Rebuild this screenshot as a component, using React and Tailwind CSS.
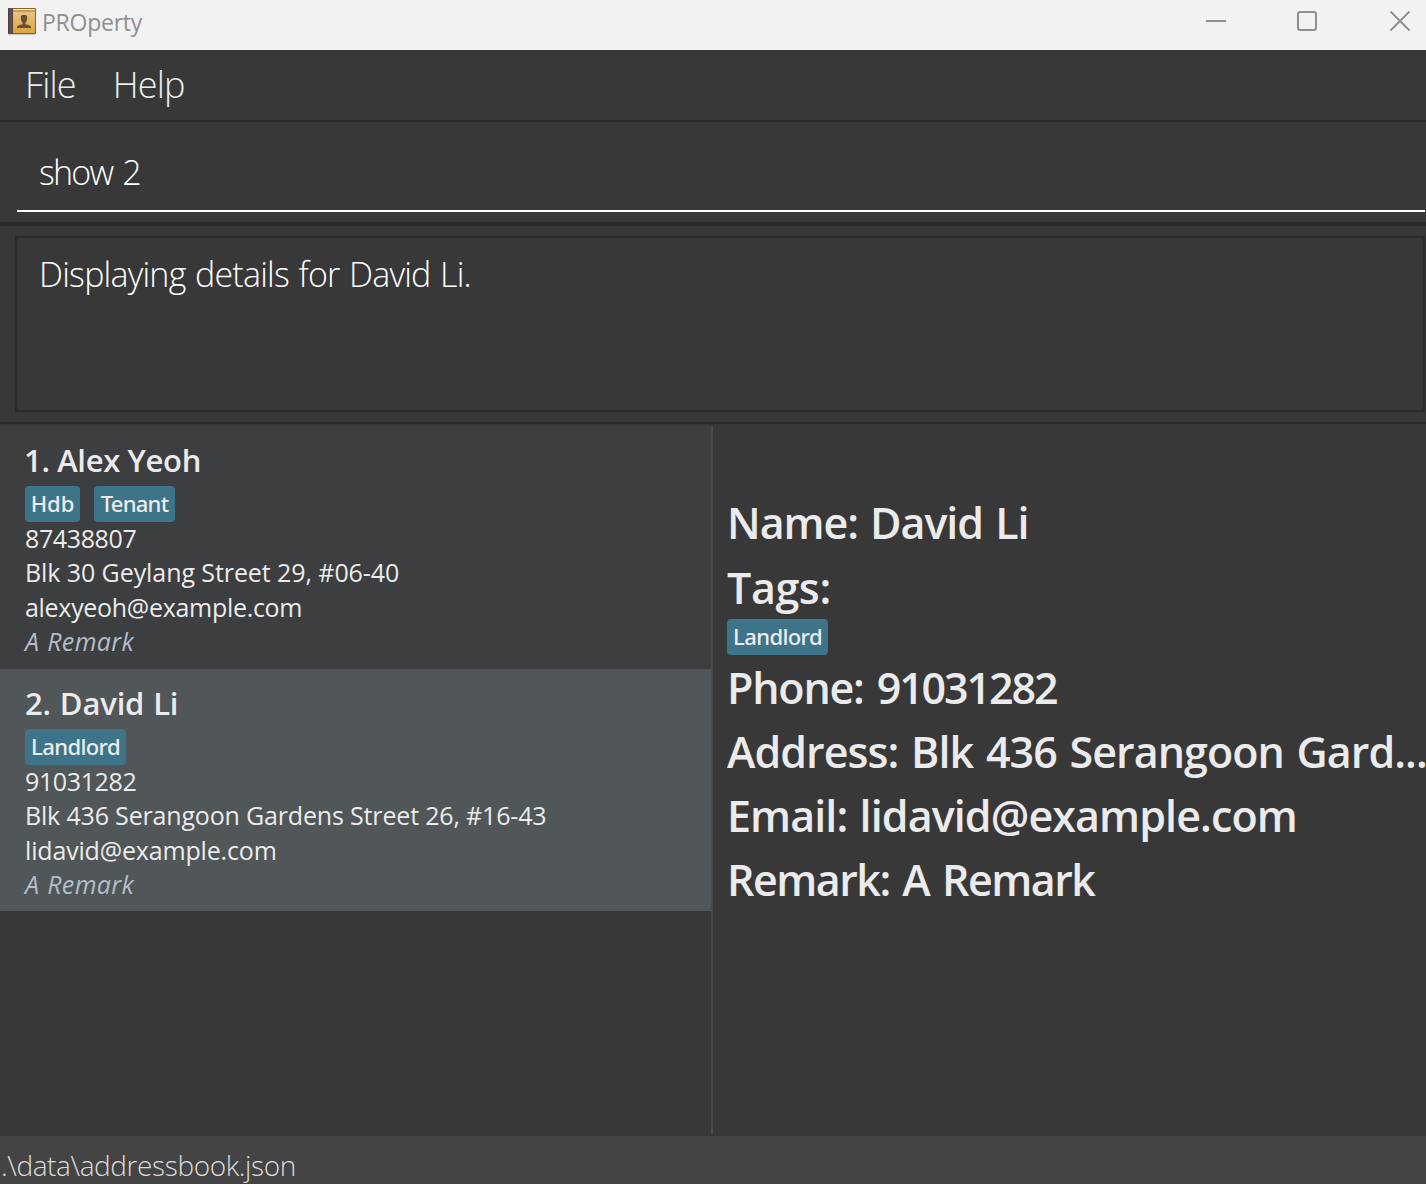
import React from 'react';

const LIGHT = "font-['Open_Sans'] font-light";

function BookIcon() {
  return (
    <svg width="30" height="30" viewBox="0 0 30 30" className="shrink-0">
      <defs>
        <linearGradient id="cover" x1="0" y1="0" x2="0" y2="1">
          <stop offset="0" stopColor="#e6c584" />
          <stop offset="1" stopColor="#dba53f" />
        </linearGradient>
        <linearGradient id="spine" x1="0" y1="0" x2="1" y2="0">
          <stop offset="0" stopColor="#453b3f" />
          <stop offset="0.6" stopColor="#6a5a58" />
          <stop offset="1" stopColor="#4a3833" />
        </linearGradient>
      </defs>
      <rect x="1.5" y="26" width="27" height="2" rx="1" fill="#c4c4c6" />
      <rect x="1" y="1" width="28" height="26" rx="1" fill="#8f6420" />
      <rect x="5" y="2" width="23" height="1.5" fill="#f6e9c8" />
      <rect x="5" y="3.5" width="23" height="1" fill="#c09243" />
      <rect x="5" y="4.5" width="23" height="21.5" fill="url(#cover)" />
      <rect x="1" y="1" width="5" height="26" rx="1" fill="url(#spine)" />
      <path d="M15 8h4l1.2 1.6-.3 4-1.5 2.2v1.4l3.8 1 1.8 1.2V21H10v-1.6l1.8-1.2 3.8-1v-1.4l-1.5-2.2-.3-4z" fill="#655035" />
    </svg>
  );
}

function WindowControls() {
  return (
    <div className="ml-auto flex items-center gap-[71px] pr-[15px] text-[#8f8f8f]">
      <svg width="20" height="20" viewBox="0 0 20 20"><path d="M0 10h20" stroke="currentColor" strokeWidth="2" /></svg>
      <svg width="20" height="20" viewBox="0 0 20 20"><rect x="1" y="1" width="18" height="18" rx="2" fill="none" stroke="currentColor" strokeWidth="2" /></svg>
      <svg width="22" height="22" viewBox="0 0 22 22" className="ml-px"><path d="M1.5 1.5l19 19M20.5 1.5l-19 19" stroke="currentColor" strokeWidth="1.8" /></svg>
    </div>
  );
}

function Tag({ children, className = '' }) {
  return (
    <span className={`flex h-9 justify-center rounded-[4px] bg-[#3e7489] font-['Noto_Sans'] text-[22px] leading-[34px] font-medium text-[#ececec] ${className}`}>
      {children}
    </span>
  );
}

const people = [
  {
    title: '1. Alex Yeoh', titleCls: '-ml-px tracking-[-0.35px]',
    tags: [['Hdb', 'w-[55px]'], ['Tenant', 'w-[81px] tracking-[-0.72px]']],
    phone: '87438807', address: 'Blk 30 Geylang Street 29, #06-40', addressCls: 'tracking-[-0.08px]',
    email: 'alexyeoh@example.com', emailCls: 'tracking-[-0.3px]', card: 'h-[243px] bg-[#3c3e3f]',
  },
  {
    title: '2. David Li', titleCls: 'tracking-[-0.15px] [word-spacing:1px]',
    tags: [['Landlord', 'w-[101px] tracking-[-0.6px]']],
    phone: '91031282', address: 'Blk 436 Serangoon Gardens Street 26, #16-43', addressCls: 'tracking-[-0.17px]',
    email: 'lidavid@example.com', emailCls: 'tracking-[-0.17px]', card: 'h-[242px] bg-[#515658]',
  },
];

function PersonCard({ p }) {
  return (
    <div className={`flex flex-col pt-3 pl-[25px] font-['Open_Sans'] text-[25px] whitespace-nowrap text-[#ebebeb] ${p.card}`}>
      <div className={`h-11 text-[31px] leading-[44px] font-semibold ${p.titleCls}`}>{p.title}</div>
      <div className="mt-1 flex gap-[14px]">
        {p.tags.map(([t, cls]) => <Tag key={t} className={cls}>{t}</Tag>)}
      </div>
      <div className="leading-[32px] tracking-[-0.37px]">{p.phone}</div>
      <div className={`leading-[36px] ${p.addressCls}`}>{p.address}</div>
      <div className={`leading-[34px] ${p.emailCls}`}>{p.email}</div>
      <div className="leading-[34px] tracking-[0.35px] text-[#b3bdcb] italic [word-spacing:1px]">A Remark</div>
    </div>
  );
}

export default function App() {
  return (
    <div className="flex h-[1184px] w-[1426px] flex-col overflow-hidden bg-[#383838]">
      <header className="flex h-[50px] items-start bg-[#f2f2f2]">
        <div className="flex h-[43px] items-center pl-[7px]">
          <BookIcon />
          <span className="mt-[2px] ml-[5px] font-['Open_Sans'] text-[23px] tracking-[-0.25px] text-[#8f8f8f]">PROperty</span>
        </div>
        <div className="ml-auto flex h-[42px]"><WindowControls /></div>
      </header>

      <nav className={`flex h-[72px] items-start gap-[37px] border-b-2 border-[#2b2b2b] pl-[25px] text-[36px] leading-[70px] text-[#ececec] ${LIGHT}`}>
        <span className="tracking-[-0.85px]">File</span>
        <span className="tracking-[-0.85px]">Help</span>
      </nav>

      <div className="h-[104px] border-b-4 border-[#2b2b2b] pl-[17px]">
        <div className={`mr-px h-[90px] border-b-2 border-white pt-5 pl-[22px] text-[34px] leading-[60px] tracking-[-1.8px] text-white [word-spacing:3px] ${LIGHT}`}>show 2</div>
      </div>

      <div className="h-[198px] border-b-2 border-[#2b2b2b] pt-[10px] pr-px pl-[15px]">
        <div className={`h-[176px] border-2 border-[#2b2b2b] pt-[7px] pl-[22px] text-[34px] leading-[58px] tracking-[-0.8px] text-white [word-spacing:1.5px] ${LIGHT}`}>
          Displaying details for David Li.
        </div>
      </div>

      <main className="flex h-[712px] pt-[2px] pb-[2px]">
        <section className="w-[711px]">
          {people.map((p) => <PersonCard key={p.title} p={p} />)}
        </section>
        <div className="w-[2px] bg-[#4b4b4b]" />
        <section className="flex w-[713px] flex-col pt-[63px] pl-[14px] font-['Open_Sans'] text-[43px] leading-[67px] font-semibold whitespace-nowrap text-[#ebebeb]">
          <div className="h-[65px] tracking-[-1.05px] [word-spacing:2px]">Name: David Li</div>
          <div className="h-[65px] tracking-[-0.4px]">Tags:</div>
          <Tag className="w-[101px] tracking-[-0.6px]">Landlord</Tag>
          <div className="h-[63px] leading-[65px] tracking-[-1.2px] [word-spacing:3px]">Phone: <span className="tracking-[-2.1px]">91031282</span></div>
          <div className="h-16 tracking-[-0.95px] [word-spacing:2.5px]">Address: Blk 436 Serangoon Gard...</div>
          <div className="h-16 tracking-[-0.9px] [word-spacing:2px]">Email: lidavid@example.com</div>
          <div className="h-16 tracking-[-1.5px] [word-spacing:3px]">Remark: A Remark</div>
        </section>
      </main>

      <footer className={`h-12 bg-[#444444] pl-px text-[28px] leading-[58px] tracking-[-0.4px] text-[#dcdcdc] ${LIGHT}`}>.\data\addressbook.json</footer>
    </div>
  );
}
